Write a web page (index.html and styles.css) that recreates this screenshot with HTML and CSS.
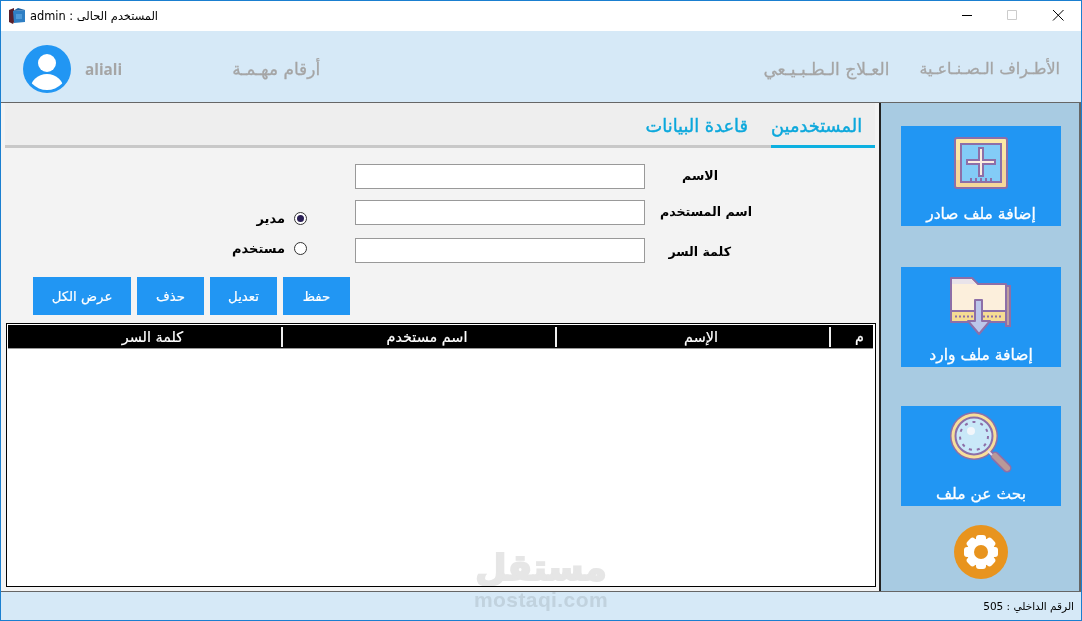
FILE: index.html
```html
<!DOCTYPE html>
<html lang="ar">
<head>
<meta charset="utf-8">
<title>admin</title>
<link rel="stylesheet" href="styles.css">
</head>
<body>
<div class="window">
  <header class="titlebar">
    <svg class="app-icon" viewBox="0 0 16 16"><path d="M0 2l5-2v14l-1 2-4-2z" fill="#5a1f2a"/><path d="M4 3l12-1v12l-11 1z" fill="#2f7fc4"/><path d="M4 3l5-3 7 2-12 1z" fill="#1d5f9e"/><path d="M7 6h6v5H7z" fill="#4f9ad8"/></svg>
    <span class="title-text" dir="rtl">المستخدم الحالى : admin</span>
    <div class="controls">
      <svg class="ctl" viewBox="0 0 46 30"><path d="M19 14.500h10" stroke="#000"/></svg>
      <svg class="ctl" viewBox="0 0 46 30"><path d="M18.500 9.500h9v9h-9z" fill="none" stroke="#ccc"/></svg>
      <svg class="ctl" viewBox="0 0 46 30"><path d="M18 9l10.500 10.500M28.500 9L18 19.500" stroke="#000" fill="none"/></svg>
    </div>
  </header>

  <nav class="topnav">
    <svg class="avatar" viewBox="0 0 48 48"><defs><clipPath id="av"><circle cx="24" cy="24" r="21"/></clipPath></defs><circle cx="24" cy="24" r="24" fill="#2196f3"/><circle cx="24" cy="18" r="9" fill="#fff"/><ellipse cx="24" cy="45" rx="17" ry="16" fill="#fff" clip-path="url(#av)"/></svg>
    <span class="user">aliali</span>
    <a class="nav-link important">أرقام مهـمـة</a>
    <a class="nav-link physio">العـلاج الـطـبـيـعي</a>
    <a class="nav-link prost">الأطـراف الـصـنـاعـية</a>
  </nav>

  <main class="main">
    <section class="panel">
      <div class="tabs">
        <span class="tab">قاعدة البيانات</span>
        <span class="tab active">المستخدمين</span>
      </div>

      <div class="form">
        <div class="roles">
          <label class="role"><span>مدير</span><i class="radio checked"></i></label>
          <label class="role"><span>مستخدم</span><i class="radio"></i></label>
        </div>
        <div class="fields">
          <div class="input"></div><span class="label l-name">الاسم</span>
          <div class="input"></div><span class="label l-user">اسم المستخدم</span>
          <div class="input"></div><span class="label l-pass">كلمة السر</span>
        </div>
      </div>

      <div class="actions">
        <button class="btn wide">عرض الكل</button>
        <button class="btn">حذف</button>
        <button class="btn">تعديل</button>
        <button class="btn">حفظ</button>
      </div>

      <div class="table">
        <div class="thead">
          <span class="th">كلمة السر</span>
          <span class="th">اسم مستخدم</span>
          <span class="th">الإسم</span>
          <span class="th num">م</span>
        </div>
      </div>
    </section>

    <aside class="sidebar">
      <a class="side-btn">
        <svg class="side-icon" viewBox="0 0 54 52">
          <rect x="1" y="1" width="52" height="50" rx="2" fill="#f5d89a"/>
          <rect x="1" y="1" width="52" height="22" rx="2" fill="#fbe9a6"/>
          <rect x="1" y="1" width="52" height="50" rx="2" fill="none" stroke="#8d6fa8" stroke-width="2"/>
          <rect x="7" y="7" width="40" height="38" fill="#83ccf7" stroke="#8d6fa8" stroke-width="2"/>
          <path d="M27 13v24M15 25h24" stroke="#8d6fa8" stroke-width="6" stroke-linecap="square"/>
          <path d="M27 13v24M15 25h24" stroke="#fdeee0" stroke-width="2" stroke-linecap="square"/>
          <path d="M17 41v4M22 41v4M27 41v4M32 41v4M37 41v4" stroke="#8d6fa8" stroke-width="2"/>
        </svg>
        <span>إضافة ملف صادر</span>
      </a>
      <a class="side-btn second">
        <svg class="side-icon" viewBox="0 0 62 60">
          <path d="M56 10h4v40H56z" fill="#bd9e9e" stroke="#8d6fa8" stroke-width="2"/>
          <path d="M1 2h21l6 6h28v38H1z" fill="#fcefdc" stroke="#8d6fa8" stroke-width="2" stroke-linejoin="round"/>
          <path d="M2 3h19l5 5H2z" fill="#e9e3ea"/>
          <path d="M2 36h53v9H2z" fill="#f6dc93"/>
          <path d="M1 35h55M1 46h55" stroke="#8d6fa8" stroke-width="2"/>
          <path d="M5 40.500h48" stroke="#8d6fa8" stroke-width="2" stroke-dasharray="2 2"/>
          <path d="M25 24h7v21h8L29 58 18 45h7z" fill="#bcc6ea" stroke="#8d6fa8" stroke-width="2" stroke-linejoin="round"/>
        </svg>
        <span>إضافة ملف وارد</span>
      </a>
      <a class="side-btn third">
        <svg class="side-icon" viewBox="0 0 64 64">
          <path d="M41 41l5 5" stroke="#8d6fa8" stroke-width="4"/>
          <path d="M46 45l12 12" stroke="#8d6fa8" stroke-width="9" stroke-linecap="round"/>
          <path d="M46 45l12 12" stroke="#b99999" stroke-width="6" stroke-linecap="round"/>
          <circle cx="25" cy="25" r="24" fill="#8d6fa8"/>
          <circle cx="25" cy="25" r="22.500" fill="#f8df9b"/>
          <circle cx="25" cy="25" r="18.500" fill="#c9e8f8" stroke="#8d6fa8" stroke-width="2"/>
          <circle cx="25" cy="25" r="14" fill="none" stroke="#8d6fa8" stroke-width="2" stroke-dasharray="3 5"/>
          <circle cx="22" cy="20" r="4" fill="#f2f6fb"/>
          <path d="M39 40l4 4" stroke="#e6dff0" stroke-width="2"/>
        </svg>
        <span>بحث عن ملف</span>
      </a>
      <svg class="gear" viewBox="0 0 54 54">
        <circle cx="27" cy="27" r="27" fill="#e8941e"/>
        <circle cx="27" cy="27" r="14" fill="#fff"/>
        <g fill="#fff">
          <rect x="22" y="10" width="10" height="9" rx="3"/>
          <rect x="22" y="35" width="10" height="9" rx="3"/>
          <rect x="10" y="22" width="9" height="10" rx="3"/>
          <rect x="35" y="22" width="9" height="10" rx="3"/>
          <rect x="22" y="10" width="10" height="9" rx="3" transform="rotate(45 27 27)"/>
          <rect x="22" y="35" width="10" height="9" rx="3" transform="rotate(45 27 27)"/>
          <rect x="10" y="22" width="9" height="10" rx="3" transform="rotate(45 27 27)"/>
          <rect x="35" y="22" width="9" height="10" rx="3" transform="rotate(45 27 27)"/>
        </g>
        <circle cx="27" cy="27" r="7" fill="#e8941e"/>
      </svg>
    </aside>
  </main>

  <footer class="statusbar"><span dir="rtl">الرقم الداخلي : 505</span></footer>

  <div class="watermark"><span class="wm-ar">مستقل</span><span class="wm-en">mostaqi.com</span></div>
</div>
</body>
</html>
```

FILE: styles.css
```css
* { box-sizing: border-box; }
html, body { margin: 0; padding: 0; }
body { width: 1082px; height: 621px; overflow: hidden; font-family: "DejaVu Sans", "Liberation Sans", sans-serif; }

.window { position: relative; width: 1082px; height: 621px; border: 1px solid #1a7fd0; display: flex; flex-direction: column; background: #d6e9f7; }

.titlebar { height: 30px; flex: none; background: #fff; display: flex; align-items: center; padding-left: 8px; }
.app-icon { width: 16px; height: 16px; margin-right: 5px; }
.title-text { font-size: 11.400px; color: #000; }
.controls { margin-left: auto; display: flex; }
.ctl { width: 46px; height: 30px; display: block; }

.topnav { height: 71px; flex: none; display: flex; align-items: center; color: #a5a5a5; padding: 4px 0 0 22px; }
.avatar { width: 48px; height: 48px; flex: none; }
.user { font: bold 15.300px "Open Sans", sans-serif; margin-left: 14px; }
.nav-link { font-size: 17px; -webkit-text-stroke: 0.3px #a5a5a5; }
.important { margin-left: 110px; }
.physio { margin-left: auto; }
.prost { font-size: 16px; margin-left: 30px; margin-right: 21px; }

.main { flex: 1; display: flex; border-top: 1px solid #666; min-height: 0; }

.panel { width: 880px; flex: none; background: #f3f3f3; border-right: 2px solid #222; padding: 0 4px; display: flex; flex-direction: column; }
.tabs { height: 45px; background: #eee; display: flex; justify-content: flex-end; align-items: flex-end; border-bottom: 3px solid #c8c8c8; flex: none; }
.tab { font-size: 17.800px; color: #0ca8dc; -webkit-text-stroke: 0.4px #0ca8dc; height: 33px; margin-bottom: -3px; padding: 0 23px 0 0; border-bottom: 3px solid transparent; }
.tab.active { width: 104px; padding: 0 15px 0 0; text-align: right; border-bottom-color: #0cb0e0; white-space: nowrap; }

.form { display: flex; height: 113px; margin-top: 16px; }
.roles { width: 302px; flex: none; display: flex; flex-direction: column; align-items: flex-end; padding-top: 45px; gap: 12px; }
.role { display: flex; align-items: center; gap: 9px; font-size: 13px; font-weight: bold; height: 18px; color: #000; }
.radio { width: 13px; height: 13px; border: 1px solid #333; border-radius: 50%; background: #fff; display: block; position: relative; }
.radio.checked::after { content: ""; position: absolute; left: 2px; top: 2px; width: 7px; height: 7px; border-radius: 50%; background: #2a1f55; }

.fields { margin-left: 48px; display: grid; grid-template-columns: 290px 120px; grid-template-rows: 36px 38px 25px; align-self: flex-start; }
.input { background: #fff; border: 1px solid #999; height: 25px; }
.label { font-size: 12.600px; font-weight: bold; color: #000; line-height: 23px; text-align: right; white-space: nowrap; }
.l-name { width: 73px; }
.l-user { width: 107px; }
.l-pass { width: 86px; margin-top: 2px; }

.actions { display: flex; gap: 6px; margin: 0 0 0 28px; height: 38px; flex: none; }
.btn { width: 67px; height: 38px; background: #2196f3; color: #fff; -webkit-text-stroke: 0.2px #fff; border: 0; padding: 0; font: 13.300px "DejaVu Sans", sans-serif; }
.btn.wide { width: 98px; }

.table { margin: 8px 0 0 1px; height: 264px; width: 870px; flex: none; border: 1px solid #000; background: #fff; padding: 1px 2px 0 1px; }
.thead { height: 24px; background: #000; display: grid; grid-template-columns: 275px 274px 274px 1fr; color: #fff; -webkit-text-stroke: 0.2px #fff; border-bottom: 1px solid #999; padding-top: 2px; }
.th { font-size: 14.400px; text-align: center; border-right: 2px solid #eee; line-height: 20px; height: 20px; padding-left: 16px; white-space: nowrap; }
.th.num { border-right: 0; text-align: right; padding: 0 9px 0 0; }

.sidebar { flex: 1; background: #a8cbe2; border-right: 2px solid #666; padding: 23px 0 0 20px; display: flex; flex-direction: column; align-items: flex-start; }
.side-btn { width: 160px; height: 100px; background: #2196f3; color: #fff; -webkit-text-stroke: 0.3px #fff; font-size: 15.500px; display: flex; flex-direction: column; align-items: center; justify-content: flex-end; padding-bottom: 3px; }
.side-btn.second { margin-top: 41px; }
.side-btn.third { margin-top: 39px; }
.side-icon { display: block; margin-bottom: auto; margin-top: 11px; width: 54px; height: 52px; }
.second .side-icon { width: 62px; height: 60px; margin-top: 9px; }
.third .side-icon { width: 64px; height: 64px; margin-top: 5px; }
.gear { width: 54px; height: 54px; margin: 19px 0 0 53px; flex: none; }

.statusbar { height: 29px; flex: none; background: #d6e9f7; border-top: 1px solid #666; display: flex; align-items: center; justify-content: flex-end; padding-right: 7px; font-size: 10.500px; color: #000; }

.watermark { position: absolute; left: 440px; top: 544px; width: 200px; display: flex; flex-direction: column; align-items: center; pointer-events: none; mix-blend-mode: multiply; }
.wm-ar { font: bold 36px/46px "DejaVu Sans", sans-serif; color: #e6e6e6; -webkit-text-stroke: 2px #e6e6e6; }
.wm-en { font: bold 21px/22px "Liberation Sans", sans-serif; letter-spacing: 0.4px; color: #e6e6e6; margin-top: -2px; }
```
